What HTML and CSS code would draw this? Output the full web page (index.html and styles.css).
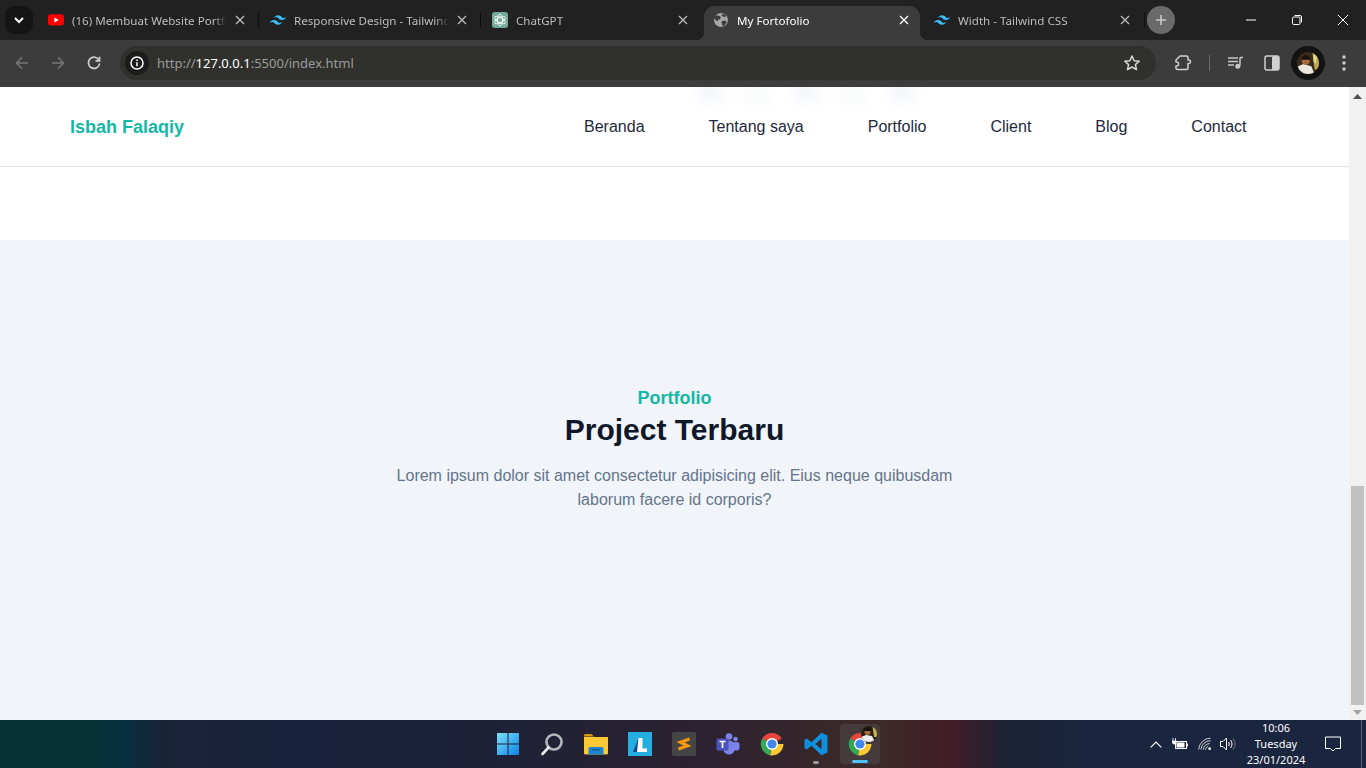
FILE: index.html
```html
<!DOCTYPE html>
<html lang="id">
<head>
<meta charset="utf-8">
<title>My Fortofolio</title>
<link rel="stylesheet" href="styles.css">
</head>
<body>
<div class="screen">
  <div class="tabstrip">
    <div class="tabsearch"><svg width="10" height="7" viewBox="0 0 10 7"><path d="M1 1l4 4 4-4" fill="none" stroke="#fff" stroke-width="2"/></svg></div>
    <div class="tabs">
      <div class="tab">
        <svg class="fav" viewBox="0 0 16 16"><rect y="2.2" width="16" height="11.4" rx="3" fill="#f00"/><path d="M6.4 5.4v5l4.3-2.5z" fill="#fff"/></svg>
        <span class="tabtitle">(16) Membuat Website Portfolio</span>
        <svg class="x" viewBox="0 0 10 10"><path d="M1 1l8 8M9 1l-8 8"/></svg>
      </div>
      <div class="sep"><i></i></div>
      <div class="tab">
        <svg class="fav" viewBox="0 0 24 24"><path fill="#38bdf8" d="M12.001 4.8c-3.2 0-5.2 1.6-6 4.8 1.2-1.6 2.6-2.2 4.2-1.8.913.228 1.565.89 2.288 1.624C13.666 10.618 15.027 12 18.001 12c3.2 0 5.2-1.6 6-4.8-1.2 1.6-2.6 2.2-4.2 1.8-.913-.228-1.565-.89-2.288-1.624C16.337 6.182 14.976 4.8 12.001 4.8zm-6 7.2c-3.2 0-5.2 1.6-6 4.8 1.2-1.6 2.6-2.2 4.2-1.8.913.228 1.565.89 2.288 1.624 1.177 1.194 2.538 2.576 5.512 2.576 3.2 0 5.2-1.6 6-4.8-1.2 1.6-2.6 2.2-4.2 1.8-.913-.228-1.565-.89-2.288-1.624C10.337 13.382 8.976 12 6.001 12z"/></svg>
        <span class="tabtitle">Responsive Design - Tailwind CSS</span>
        <svg class="x" viewBox="0 0 10 10"><path d="M1 1l8 8M9 1l-8 8"/></svg>
      </div>
      <div class="sep"><i></i></div>
      <div class="tab third">
        <svg class="fav" viewBox="0 0 16 16"><rect width="16" height="16" rx="3" fill="#74aa9c"/><g fill="none" stroke="#f2f7f6" stroke-width=".9"><ellipse cx="8" cy="8" rx="2.6" ry="5.8"/><ellipse cx="8" cy="8" rx="2.6" ry="5.8" transform="rotate(60 8 8)"/><ellipse cx="8" cy="8" rx="2.6" ry="5.8" transform="rotate(120 8 8)"/></g></svg>
        <span class="tabtitle">ChatGPT</span>
        <svg class="x" viewBox="0 0 10 10"><path d="M1 1l8 8M9 1l-8 8"/></svg>
      </div>
      <div class="sep"></div>
      <div class="tab active">
        <svg class="fav" viewBox="0 0 16 16"><circle cx="8" cy="8" r="7" fill="#a6a6a6"/><path d="M3 3.2l3.6.9 1.4 1.7-1.8 1.9-1.3-.1-.3 2-2.8-2.4-.7-2zM9.6 1.6l3.6 2-1.2 1.6-2.2-.6-1.2-1.5zM9 9.2l3.2-.6 1.6 1.7-2.8 3.6-1.4.3-.3-2.2-1-1.3z" fill="#3c3c3c"/></svg>
        <span class="tabtitle">My Fortofolio</span>
        <svg class="x" viewBox="0 0 10 10"><path d="M1 1l8 8M9 1l-8 8"/></svg>
      </div>
      <div class="sep"></div>
      <div class="tab last">
        <svg class="fav" viewBox="0 0 24 24"><path fill="#38bdf8" d="M12.001 4.8c-3.2 0-5.2 1.6-6 4.8 1.2-1.6 2.6-2.2 4.2-1.8.913.228 1.565.89 2.288 1.624C13.666 10.618 15.027 12 18.001 12c3.2 0 5.2-1.6 6-4.8-1.2 1.6-2.6 2.2-4.2 1.8-.913-.228-1.565-.89-2.288-1.624C16.337 6.182 14.976 4.8 12.001 4.8zm-6 7.2c-3.2 0-5.2 1.6-6 4.8 1.2-1.6 2.6-2.2 4.2-1.8.913.228 1.565.89 2.288 1.624 1.177 1.194 2.538 2.576 5.512 2.576 3.2 0 5.2-1.6 6-4.8-1.2 1.6-2.6 2.2-4.2 1.8-.913-.228-1.565-.89-2.288-1.624C10.337 13.382 8.976 12 6.001 12z"/></svg>
        <span class="tabtitle">Width - Tailwind CSS</span>
        <svg class="x" viewBox="0 0 10 10"><path d="M1 1l8 8M9 1l-8 8"/></svg>
      </div>
      <div class="sep"><i></i></div>
    </div>
    <div class="newtab"><svg width="12" height="12" viewBox="0 0 12 12"><path d="M6 1v10M1 6h10" stroke="#c8c8c8" stroke-width="1.6"/></svg></div>
    <div class="winctl">
      <div class="winbtn"><svg width="12" height="12" viewBox="0 0 12 12"><path d="M1 6h10" stroke="#fff"/></svg></div>
      <div class="winbtn"><svg width="12" height="12" viewBox="0 0 12 12" fill="none" stroke="#fff"><rect x="1.5" y="3" width="7.5" height="7.5" rx="1.2"/><path d="M3.6 1.5h5.4a1.5 1.5 0 0 1 1.5 1.5v5.4"/></svg></div>
      <div class="winbtn"><svg width="12" height="12" viewBox="0 0 12 12"><path d="M.8.8l10.4 10.4M11.200.8L.8 11.200" stroke="#fff"/></svg></div>
    </div>
  </div>

  <div class="toolbar">
    <div class="tbtn first"><svg width="16" height="16" viewBox="0 0 16 16" fill="none" stroke="#757575" stroke-width="1.6"><path d="M14 8H2.500M8 2.500L2.500 8 8 13.500"/></svg></div>
    <div class="tbtn"><svg width="16" height="16" viewBox="0 0 16 16" fill="none" stroke="#757575" stroke-width="1.6"><path d="M2 8h11.500M8 2.500L13.500 8 8 13.500"/></svg></div>
    <div class="tbtn"><svg width="16" height="16" viewBox="0 0 16 16" fill="none" stroke="#d0d0d0" stroke-width="1.7"><path d="M13 5.200A5.600 5.600 0 1 0 13.600 8.500"/><path d="M13.500 1.800v4h-4" /></svg></div>
    <div class="omnibox">
      <div class="siteinfo"><svg width="14" height="14" viewBox="0 0 14 14"><circle cx="7" cy="7" r="6" fill="none" stroke="#fff" stroke-width="1.500"/><path d="M7 6.200v4M7 3.400v1.600" stroke="#fff" stroke-width="1.500"/></svg></div>
      <div class="url">http://<b>127.0.0.1</b>:5500/index.html</div>
      <svg class="star" width="18" height="18" viewBox="0 0 18 18"><path d="M9 2l2.100 4.700 5.100.5-3.800 3.400 1.100 5L9 13l-4.500 2.600 1.100-5-3.800-3.400 5.100-.5z" fill="none" stroke="#d8d8d8" stroke-width="1.500" stroke-linejoin="round"/></svg>
    </div>
    <div class="tools">
      <svg class="ext" width="18" height="16" viewBox="0 0 18 16"><path d="M5 1h6.500a1.500 1.500 0 0 1 1.500 1.500V5h.8a1.700 1.700 0 0 1 0 3.400H13v4.600a1.500 1.500 0 0 1-1.500 1.500H2.500a1.500 1.500 0 0 1-1.500-1.500V11h.6a2 2 0 0 0 0-4H1V5z" fill="none" stroke="#d0d0d0" stroke-width="1.500" stroke-linejoin="round"/></svg>
      <i class="toolsep"></i>
      <svg class="media" width="16" height="14" viewBox="0 0 16 14"><path d="M0 2h10M0 5.500h10M0 9h6" stroke="#c8c8c8" stroke-width="1.400"/><path d="M12 1.500h3M12 1.500v8" stroke="#c8c8c8" stroke-width="1.500" fill="none"/><circle cx="9.800" cy="10.200" r="2.500" fill="#c8c8c8"/></svg>
      <svg class="panel" width="16" height="16" viewBox="0 0 16 16"><rect x="1" y="1" width="14" height="14" rx="2" fill="none" stroke="#d0d0d0" stroke-width="1.500"/><rect x="8" y="1" width="7" height="14" rx="1.500" fill="#d0d0d0"/></svg>
      <div class="avatar"><svg width="22" height="22" viewBox="0 0 20 20"><defs><clipPath id="av"><circle cx="10" cy="10" r="10"/></clipPath></defs><g clip-path="url(#av)"><rect width="20" height="20" fill="#3a2a1e"/><path d="M14 0h6v16h-4z" fill="#b9a84e"/><path d="M15 2l3 2-1 7-2-3z" fill="#e6dc90"/><path d="M1 20v-7l5-2 7 2 3 7z" fill="#ece8e2"/><circle cx="8" cy="8" r="3.600" fill="#a86a40"/><path d="M4 7a4 4 0 0 1 8 0z" fill="#1e120c"/></g></svg></div>
      <svg class="kebab" width="4" height="16" viewBox="0 0 4 16"><circle cx="2" cy="2" r="1.700" fill="#d0d0d0"/><circle cx="2" cy="8" r="1.700" fill="#d0d0d0"/><circle cx="2" cy="14" r="1.700" fill="#d0d0d0"/></svg>
    </div>
  </div>

  <div class="viewport">
    <main class="page">
      <header class="navbar">
        <div class="ghosts"><i></i><i></i><i></i><i></i><i></i></div>
        <a class="logo">Isbah Falaqiy</a>
        <nav class="menu">
          <a>Beranda</a><a>Tentang saya</a><a>Portfolio</a><a>Client</a><a>Blog</a><a>Contact</a>
        </nav>
      </header>
      <div class="spacer"></div>
      <section class="portfolio">
        <h4>Portfolio</h4>
        <h2>Project Terbaru</h2>
        <p>Lorem ipsum dolor sit amet consectetur adipisicing elit. Eius neque quibusdam laborum facere id corporis?</p>
      </section>
    </main>
    <aside class="scrollbar">
      <svg class="arrow" width="9" height="5" viewBox="0 0 9 5"><path d="M0 5l4.500-5L9 5z" fill="#505050"/></svg>
      <div class="track"><div class="thumb"></div></div>
      <svg class="arrow" width="9" height="5" viewBox="0 0 9 5"><path d="M0 0l4.500 5L9 0z" fill="#a3a3a3"/></svg>
    </aside>
  </div>

  <footer class="taskbar">
    <div class="apps">
      <div class="app"><svg width="24" height="24" viewBox="0 0 24 24"><defs><linearGradient id="w" x1="0" y1="0" x2="1" y2="1"><stop offset="0" stop-color="#7fe0fb"/><stop offset="1" stop-color="#0a84e6"/></linearGradient></defs><path fill="url(#w)" d="M1 1h10.500v10.500H1zM12.500 1H23v10.500H12.500zM1 12.500h10.500V23H1zM12.500 12.500H23V23H12.500z"/></svg></div>
      <div class="app"><svg width="24" height="24" viewBox="0 0 24 24" fill="none"><circle cx="14" cy="10" r="7.500" stroke="#b4b8bc" stroke-width="2.600"/><path d="M8.500 15.500L2.500 22" stroke="#eceef0" stroke-width="2.600" stroke-linecap="round"/></svg></div>
      <div class="app"><svg width="24" height="24" viewBox="0 0 24 24"><path d="M0 3.500a1.500 1.500 0 0 1 1.500-1.500h6l2.500 2.500h-10z" fill="#d9960f"/><path d="M0 5h24v16a1.500 1.500 0 0 1-1.500 1.500h-21A1.500 1.500 0 0 1 0 21z" fill="#fcc934"/><path d="M6 15h12a1.500 1.500 0 0 1 1.500 1.500v6h-15v-6A1.500 1.500 0 0 1 6 15z" fill="#1d86cf"/><rect x="8" y="17" width="8" height="1.600" rx=".8" fill="#0e5a9a"/></svg></div>
      <div class="app"><svg width="24" height="24" viewBox="0 0 24 24"><rect width="24" height="24" fill="#25aee0"/><path d="M10.500 6L5 20h4l1.500-2z" fill="#14478f"/><path d="M10.500 6h4v10.500H19V20H9z" fill="#fff"/></svg></div>
      <div class="app"><svg width="24" height="24" viewBox="0 0 24 24"><rect width="24" height="24" rx="2" fill="#454545"/><path d="M17.500 7L8.500 10.200 15.500 13.800 6.500 17" fill="none" stroke="#f8980f" stroke-width="3.200"/></svg></div>
      <div class="app"><svg width="24" height="24" viewBox="0 0 24 24"><circle cx="19.500" cy="7" r="2.300" fill="#7b83eb"/><rect x="16" y="10" width="7.500" height="8.500" rx="3" fill="#7b83eb"/><circle cx="13" cy="4.500" r="3.300" fill="#7b83eb"/><rect x="7.500" y="8.500" width="11" height="14" rx="5" fill="#7b83eb"/><rect x="0.500" y="6.500" width="12" height="12" rx="1.500" fill="#4b53bc"/><path d="M3.500 9.500h6M6.500 9.500v6.500" stroke="#fff" stroke-width="1.700"/></svg></div>
      <div class="app"><svg width="24" height="24" viewBox="0 0 24 24"><path d="M12 12L2.200 6.400A11.500 11.500 0 0 1 21.800 6.400z" fill="#e8453c"/><path d="M12 12h11.500A11.500 11.500 0 0 1 10 23.300z" fill="#fcc934"/><path d="M12 12L10 23.300A11.500 11.500 0 0 1 2.200 6.400z" fill="#34a853"/><circle cx="12" cy="12" r="6" fill="#fff"/><circle cx="12" cy="12" r="4.600" fill="#3f87ea"/></svg></div>
      <div class="app running"><svg width="24" height="24" viewBox="0 0 24 24"><path d="M17.500 0.800L23.500 3.500v17l-6 2.700L7.500 13.800l-4.700 3.700L.5 16.200V7.800l2.300-1.300 4.700 3.700zM17.500 6.800L11.500 12l6 5.200z" fill="#0f8fdc"/></svg></div>
      <div class="app open">
        <svg width="24" height="24" viewBox="0 0 24 24"><path d="M12 12L2.200 6.400A11.500 11.500 0 0 1 21.800 6.400z" fill="#e8453c"/><path d="M12 12h11.500A11.500 11.500 0 0 1 10 23.300z" fill="#fcc934"/><path d="M12 12L10 23.300A11.500 11.500 0 0 1 2.200 6.400z" fill="#34a853"/><circle cx="12" cy="12" r="6" fill="#fff"/><circle cx="12" cy="12" r="4.600" fill="#3f87ea"/></svg>
        <svg class="badge" width="16" height="16" viewBox="0 0 16 16"><defs><clipPath id="bd"><circle cx="8" cy="8" r="8"/></clipPath></defs><g clip-path="url(#bd)"><rect width="16" height="16" fill="#2a1e14"/><path d="M11.500 0h4.500v11h-3z" fill="#c9b44a"/><path d="M0 16v-5l5-2 6 1 3 6z" fill="#eee"/><circle cx="6.500" cy="6" r="3" fill="#a86a40"/><path d="M3 5a3.500 3.500 0 0 1 7 0z" fill="#16100c"/></g></svg>
      </div>
    </div>
    <div class="tray">
      <svg class="t-chev" width="12" height="7" viewBox="0 0 12 7"><path d="M.7 6.300L6 1l5.300 5.300" fill="none" stroke="#fff" stroke-width="1.200"/></svg>
      <svg class="t-batt" width="16" height="12" viewBox="0 0 16 12"><path d="M1 0v3M3.500 0v3M0 3h4.500v1.500l-1.500 1.500h-1.500l-1.500-1.500z" stroke="#fff" stroke-width=".8" fill="#fff"/><rect x="3.500" y="3.500" width="11" height="7" fill="none" stroke="#fff"/><rect x="4.500" y="4.500" width="8" height="5" fill="#fff"/><rect x="15" y="5.500" width="1" height="3" fill="#fff"/></svg>
      <svg class="t-wifi" width="14" height="14" viewBox="0 0 15 14" fill="none" stroke="#d8d8d8"><path d="M.7 13A13 13 0 0 1 13.500 .7M3.200 13A10 10 0 0 1 13.500 3.500M5.700 13A7.500 7.500 0 0 1 12.500 6.500M8 13A5 5 0 0 1 11 9.200"/><circle cx="12.500" cy="12" r="1.500" fill="#fff" stroke="none"/></svg>
      <svg class="t-vol" width="16" height="14" viewBox="0 0 16 14" fill="none" stroke="#fff"><path d="M.5 4.500h2.500L6.500 1v12L3 9.500H.500z"/><path d="M8.500 5a3 3 0 0 1 0 4M10.500 3a6 6 0 0 1 0 8"/><path d="M13 1.500a9 9 0 0 1 0 11" stroke="#777"/></svg>
      <div class="clock"><span>10:06</span><span>Tuesday</span><span>23/01/2024</span></div>
      <svg class="t-note" width="16" height="16" viewBox="0 0 16 16"><path d="M.5 1h15v11.500h-5L8 15l-2.500-2.500h-5z" fill="none" stroke="#fff"/></svg>
      <i class="t-edge"></i>
    </div>
  </footer>
</div>
</body>
</html>
```
FILE: styles.css
```css
* { box-sizing: border-box; margin: 0; padding: 0; }
html, body { width: 1366px; height: 768px; overflow: hidden; }
body { font-family: "Liberation Sans", Arial, sans-serif; background: #fff; }
.screen { width: 1366px; height: 768px; display: flex; flex-direction: column; }

/* tab strip */
.tabstrip { height: 40px; background: #212121; display: flex; align-items: flex-start; padding-left: 5px; flex: none; }
.tabsearch { width: 28px; height: 28px; margin-top: 6px; background: #151515; border-radius: 9px; display: flex; align-items: center; justify-content: center; flex: none; }
.tabs { display: flex; margin-left: 5px; margin-top: 6px; flex: none; }
.tab { position: relative; width: 216px; height: 34px; display: flex; align-items: center; padding: 0 9px 6px 10px; color: #bdbdbd; font: 11.6px "Noto Sans", "Open Sans", sans-serif; }
.tab.third { padding-right: 10px; }
.tab.last { margin-left: -2px; padding-right: 10px; }
.tab.active { background: #3c3c3c; border-radius: 10px 10px 0 0; color: #fff; padding-right: 11px; }
.tab.active .fav { margin-left: -1px; }
.tab.active::before, .tab.active::after { content: ""; position: absolute; bottom: 0; width: 8px; height: 8px; }
.tab.active::before { left: -8px; background: radial-gradient(circle at 0 0, transparent 8px, #3c3c3c 8.5px); }
.tab.active::after { right: -8px; background: radial-gradient(circle at 100% 0, transparent 8px, #3c3c3c 8.5px); }
.fav { width: 16px; height: 16px; flex: none; }
.tabtitle { flex: 1; margin-left: 8px; white-space: nowrap; overflow: hidden; -webkit-mask-image: linear-gradient(90deg, #000 calc(100% - 14px), transparent); mask-image: linear-gradient(90deg, #000 calc(100% - 14px), transparent); }
.x { width: 10px; height: 10px; flex: none; margin-left: 8px; fill: none; stroke: #bdbdbd; stroke-width: 1.3; }
.tab.active .x { stroke: #fff; }
.sep { width: 6px; height: 34px; display: flex; justify-content: flex-end; padding-right: 1px; align-items: flex-start; flex: none; }
.sep i { display: block; width: 1px; height: 16px; margin-top: 6px; background: #0e0e0e; }
.newtab { width: 28px; height: 28px; margin: 6px 0 0 1px; border-radius: 50%; background: #6a6a6a; display: flex; align-items: center; justify-content: center; flex: none; }
.winctl { margin-left: auto; display: flex; height: 40px; flex: none; }
.winbtn { width: 46px; height: 40px; display: flex; align-items: center; justify-content: center; }

/* toolbar */
.toolbar { height: 47px; background: #3c3c3c; display: flex; align-items: center; flex: none; padding: 0 0 1px 5px; }
.tbtn { width: 36px; height: 34px; display: flex; align-items: center; justify-content: center; flex: none; padding-right: 2px; }
.omnibox { width: 1036px; height: 34px; margin-left: 7px; background: #30302c; border-radius: 17px; display: flex; align-items: center; padding: 0 15px 0 5px; flex: none; }
.siteinfo { width: 24px; height: 24px; border-radius: 50%; background: #1b1b1b; display: flex; align-items: center; justify-content: center; flex: none; }
.url { margin-left: 8px; flex: 1; font: 13px "Noto Sans", "Open Sans", sans-serif; color: #9c9c9c; white-space: nowrap; }
.url b { font-weight: 400; color: #fff; }
.tools { display: flex; align-items: center; flex: 1; }
.ext { margin-left: 19px; }
.toolsep { display: block; width: 1px; height: 16px; background: #6a6a6a; margin-left: 16px; }
.media { margin-left: 18px; }
.panel { margin-left: 20px; }
.avatar { width: 34px; height: 34px; border-radius: 50%; background: #131313; margin-left: 11px; display: flex; align-items: center; justify-content: center; }
.kebab { margin-left: 17px; }

/* page */
.viewport { flex: 1; min-height: 0; display: flex; }
.page { flex: 1; display: flex; flex-direction: column; background: #fff; }
.navbar { position: relative; height: 80px; border-bottom: 1px solid #e4e4e7; display: flex; align-items: center; justify-content: space-between; padding: 1px 102.5px 0 70px; overflow: hidden; flex: none; }
.logo { font-size: 18px; font-weight: 700; color: #14b8a6; }
.menu { display: flex; gap: 64px; }
.menu a { font-size: 16px; color: #1e293b; }
.ghosts { position: absolute; left: 697px; top: -9px; display: flex; gap: 22px; }
.ghosts i { display: block; width: 26px; height: 26px; border-radius: 50%; background: #f5f6f9; filter: blur(7px); }
.ghosts i:nth-child(even) { margin-top: 4px; background: #fafbfc; }
.spacer { height: 73px; flex: none; }
.portfolio { flex: 1; background: #f1f5f9; padding-top: 144px; display: flex; flex-direction: column; align-items: center; text-align: center; }
.portfolio h4 { font-size: 18px; line-height: 28px; font-weight: 700; color: #14b8a6; }
.portfolio h2 { font-size: 30px; line-height: 36px; font-weight: 700; color: #0f172a; margin-bottom: 16px; }
.portfolio p { width: 576px; font-size: 16px; line-height: 24px; color: #64748b; }

.scrollbar { width: 17px; background: #f1f1f1; display: flex; flex-direction: column; align-items: center; padding: 7px 0 5px; flex: none; }
.arrow { flex: none; }
.track { flex: 1; width: 100%; padding: 387px 2px 5px; display: flex; }
.thumb { flex: 1; background: #c1c1c1; }

/* taskbar */
.taskbar { height: 48px; flex: none; position: relative; display: flex; align-items: center; background: linear-gradient(90deg, #063335 0, #063335 85px, #06303f 122px, #1a2338 165px, #18213c 300px, #1c2138 480px, #2c2230 700px, #3c2a28 880px, #421c28 955px, #1c2335 1005px, #1a2540 1100px, #1a2540 1366px); }
.apps { display: flex; margin-left: 486px; }
.app { position: relative; width: 44px; height: 40px; display: flex; align-items: center; justify-content: center; }
.app.running::after { content: ""; position: absolute; left: 19px; bottom: 0; width: 6px; height: 3px; border-radius: 2px; background: #9a9a9a; }
.app.open { width: 40px; margin-left: 2px; background: #453a3c; border-radius: 4px; }
.app.open::after { content: ""; position: absolute; left: 12px; bottom: 1px; width: 16px; height: 3px; border-radius: 2px; background: #4cc2ff; }
.badge { position: absolute; right: 3px; top: 2px; }
.tray { margin-left: auto; height: 48px; display: flex; align-items: center; flex: none; }
.t-batt { margin-left: 10px; }
.t-wifi { margin-left: 10px; }
.t-vol { margin-left: 8px; }
.clock { width: 80px; display: flex; flex-direction: column; align-items: center; font: 11px/16px "Noto Sans", "Open Sans", sans-serif; color: #fff; }
.t-note { margin-left: 9px; }
.t-edge { display: block; width: 1px; height: 48px; background: #5a6478; margin-left: 20px; margin-right: 4px; }
```
